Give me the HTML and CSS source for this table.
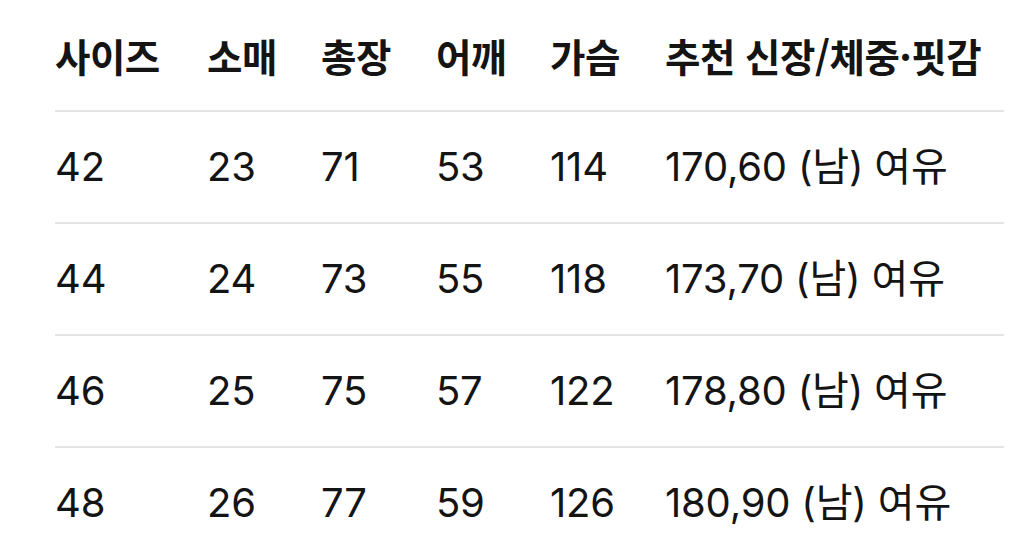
FILE: index.html
```html
<!DOCTYPE html>
<html lang="ko">
<head>
<meta charset="utf-8">
<link rel="stylesheet" href="styles.css">
</head>
<body>
<div class="table">
  <div class="row head">
    <div class="cell">사이즈</div><div class="cell">소매</div><div class="cell">총장</div><div class="cell">어깨</div><div class="cell">가슴</div><div class="cell">추천 신장/체중·핏감</div>
  </div>
  <div class="row">
    <div class="cell">42</div><div class="cell">23</div><div class="cell">71</div><div class="cell">53</div><div class="cell">114</div><div class="cell">170,60 (남) 여유</div>
  </div>
  <div class="row">
    <div class="cell">44</div><div class="cell">24</div><div class="cell">73</div><div class="cell">55</div><div class="cell">118</div><div class="cell">173,70 (남) 여유</div>
  </div>
  <div class="row">
    <div class="cell">46</div><div class="cell">25</div><div class="cell">75</div><div class="cell">57</div><div class="cell">122</div><div class="cell">178,80 (남) 여유</div>
  </div>
  <div class="row last">
    <div class="cell">48</div><div class="cell">26</div><div class="cell">77</div><div class="cell">59</div><div class="cell">126</div><div class="cell">180,90 (남) 여유</div>
  </div>
</div>
</body>
</html>
```

FILE: styles.css
```css
html, body {
  margin: 0;
  padding: 0;
  background: #ffffff;
}
body {
  font-family: Inter, "Noto Sans CJK KR", sans-serif;
  color: #141414;
  overflow: hidden;
}
.table {
  margin-left: 55px;
  width: 949px;
}
.row {
  display: grid;
  grid-template-columns: 152px 114px 115px 114px 115px 1fr;
  height: 110px;
  align-items: center;
  border-bottom: 2px solid #e4e4e4;
  font-size: 40px;
  font-weight: 400;
  letter-spacing: -0.2px;
}
.row.head {
  font-weight: 600;
  font-family: "Noto Sans CJK KR", sans-serif;
  font-size: 38.5px;
  letter-spacing: -0.5px;
}
.row.last {
  border-bottom: none;
}
.cell {
  white-space: nowrap;
  line-height: 1;
}
```
